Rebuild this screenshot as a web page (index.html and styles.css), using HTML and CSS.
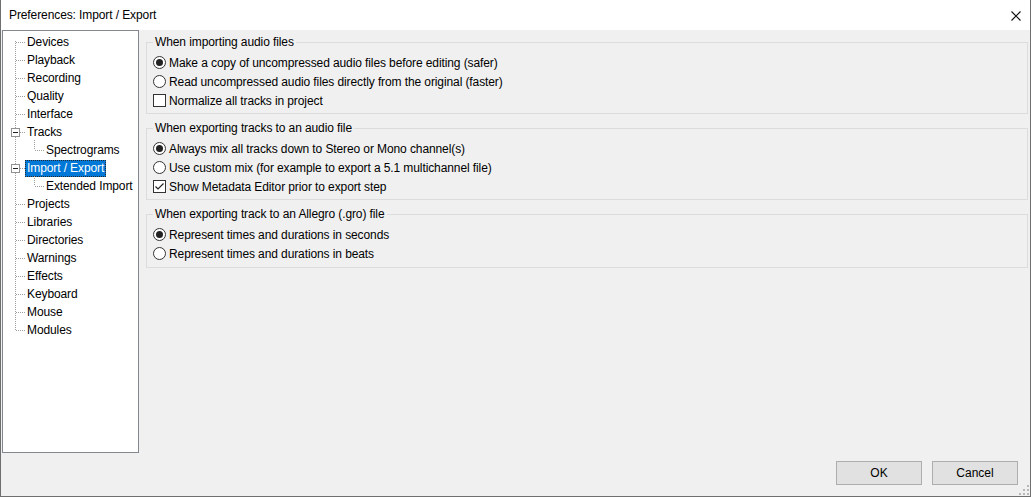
FILE: index.html
```html
<!DOCTYPE html>
<html>
<head>
<meta charset="utf-8">
<title>Preferences: Import / Export</title>
<link rel="stylesheet" href="styles.css">
</head>
<body>
<div class="window">
  <div class="titlebar">
    <span class="title">Preferences: Import / Export</span>
    <svg class="close" width="10" height="10" viewBox="0 0 10 10"><path d="M0.5 0.5 L9.5 9.5 M9.5 0.5 L0.5 9.5" stroke="#111" stroke-width="1.1" fill="none"/></svg>
  </div>
  <div class="main">
    <div class="tree-panel">
      <ul class="tree">
        <li><div class="row"><span class="label">Devices</span></div></li>
        <li><div class="row"><span class="label">Playback</span></div></li>
        <li><div class="row"><span class="label">Recording</span></div></li>
        <li><div class="row"><span class="label">Quality</span></div></li>
        <li><div class="row"><span class="label">Interface</span></div></li>
        <li><div class="row parent"><span class="exp"></span><span class="label">Tracks</span></div>
          <ul class="sub"><li><div class="row child"><span class="label">Spectrograms</span></div></li></ul>
        </li>
        <li><div class="row parent"><span class="exp"></span><span class="label selected">Import / Export</span></div>
          <ul class="sub"><li><div class="row child"><span class="label">Extended Import</span></div></li></ul>
        </li>
        <li><div class="row"><span class="label">Projects</span></div></li>
        <li><div class="row"><span class="label">Libraries</span></div></li>
        <li><div class="row"><span class="label">Directories</span></div></li>
        <li><div class="row"><span class="label">Warnings</span></div></li>
        <li><div class="row"><span class="label">Effects</span></div></li>
        <li><div class="row"><span class="label">Keyboard</span></div></li>
        <li><div class="row"><span class="label">Mouse</span></div></li>
        <li><div class="row"><span class="label">Modules</span></div></li>
      </ul>
    </div>
    <div class="content">
      <fieldset class="group">
        <legend>When importing audio files</legend>
        <div class="opt"><span class="radio on"></span><span>Make a copy of uncompressed audio files before editing (safer)</span></div>
        <div class="opt"><span class="radio"></span><span>Read uncompressed audio files directly from the original (faster)</span></div>
        <div class="opt"><span class="check"></span><span>Normalize all tracks in project</span></div>
      </fieldset>
      <fieldset class="group">
        <legend>When exporting tracks to an audio file</legend>
        <div class="opt"><span class="radio on"></span><span>Always mix all tracks down to Stereo or Mono channel(s)</span></div>
        <div class="opt"><span class="radio"></span><span>Use custom mix (for example to export a 5.1 multichannel file)</span></div>
        <div class="opt"><span class="check"><svg width="11" height="11" viewBox="0 0 11 11"><path d="M1.5 5.5 L4 8 L9.5 2.5" stroke="#222" stroke-width="1.2" fill="none"/></svg></span><span>Show Metadata Editor prior to export step</span></div>
      </fieldset>
      <fieldset class="group last">
        <legend>When exporting track to an Allegro (.gro) file</legend>
        <div class="opt"><span class="radio on"></span><span>Represent times and durations in seconds</span></div>
        <div class="opt"><span class="radio"></span><span>Represent times and durations in beats</span></div>
      </fieldset>
    </div>
  </div>
  <div class="footer">
    <button class="btn">OK</button>
    <button class="btn">Cancel</button>
  </div>
  <svg class="grip" width="10" height="10" viewBox="0 0 10 10">
    <rect x="8" y="0" width="2" height="2" fill="#b8b8b8"/>
    <rect x="4" y="4" width="2" height="2" fill="#b8b8b8"/>
    <rect x="8" y="4" width="2" height="2" fill="#b8b8b8"/>
    <rect x="0" y="8" width="2" height="2" fill="#b8b8b8"/>
    <rect x="4" y="8" width="2" height="2" fill="#b8b8b8"/>
    <rect x="8" y="8" width="2" height="2" fill="#b8b8b8"/>
  </svg>
</div>
</body>
</html>
```
FILE: styles.css
```css
* { box-sizing: border-box; }
html, body { margin: 0; padding: 0; }
body {
  font-family: "Liberation Sans", Arial, sans-serif;
  font-size: 12px;
  letter-spacing: -0.1px;
  color: #000;
  background: #f0f0f0;
}
.window {
  position: relative;
  width: 1031px;
  height: 497px;
  background: #f0f0f0;
  border: 1px solid #6f6f6f;
  border-top: none;
  display: flex;
  flex-direction: column;
}
.titlebar {
  height: 30px;
  flex: none;
  background: #fff;
  display: flex;
  align-items: center;
  justify-content: space-between;
  padding: 0 9px 0 8px;
}
.title { font-size: 12px; }
.close { display: block; margin-top: 1px; }

.main {
  height: 423px;
  flex: none;
  display: flex;
}
.tree-panel {
  width: 137px;
  height: 423px;
  margin-left: 1px;
  background: #fff;
  border: 1px solid #828790;
  padding-top: 2px;
  flex: none;
}
.tree, .sub {
  list-style: none;
  margin: 0;
  padding: 0;
}
.tree { position: relative; }
.tree::before {
  content: "";
  position: absolute;
  left: 12px;
  top: 8px;
  bottom: 9px;
  width: 1px;
  background: repeating-linear-gradient(to bottom, #a0a0a0 0 1px, transparent 1px 2px);
}
.sub { position: relative; }
.sub::before {
  content: "";
  position: absolute;
  left: 31px;
  top: -1px;
  height: 10px;
  width: 1px;
  background: repeating-linear-gradient(to bottom, #a0a0a0 0 1px, transparent 1px 2px);
}
.row {
  position: relative;
  height: 18px;
  display: flex;
  align-items: center;
  padding-left: 22px;
}
.row::before {
  content: "";
  position: absolute;
  left: 13px;
  top: 9px;
  width: 9px;
  height: 1px;
  background: repeating-linear-gradient(to right, #a0a0a0 0 1px, transparent 1px 2px);
}
.row.child { padding-left: 41px; }
.row.child::before { left: 32px; width: 9px; }
.row.parent::before { left: 17px; width: 5px; }
.exp {
  position: absolute;
  left: 8px;
  top: 5px;
  width: 9px;
  height: 9px;
  border: 1px solid #919191;
  background: #fff;
  z-index: 1;
}
.exp::after {
  content: "";
  position: absolute;
  left: 1px;
  top: 3px;
  width: 5px;
  height: 1px;
  background: #222;
}
.label {
  padding: 0 2px;
  line-height: 17px;
  height: 17px;
  white-space: nowrap;
}
.label.selected {
  background: #0078d7;
  color: #fff;
  outline: 1px dotted #2a2a2a;
  outline-offset: -1px;
}

.content {
  flex: 1;
  padding: 4px 2px 0 7px;
  display: flex;
  flex-direction: column;
  gap: 6px;
}
.group {
  margin: 0;
  border: 1px solid #dcdcdc;
  padding: 3px 0 3px 6px;
  min-width: 0;
}
.group.last { padding-bottom: 4px; }
.group legend {
  padding: 0 2px;
  line-height: 16px;
  font-size: 12px;
}
.opt {
  height: 19px;
  display: flex;
  align-items: center;
  gap: 3px;
  white-space: nowrap;
}
.radio {
  width: 13px;
  height: 13px;
  border: 1px solid #333;
  border-radius: 50%;
  background: #fff;
  display: flex;
  align-items: center;
  justify-content: center;
  flex: none;
}
.radio.on::after {
  content: "";
  width: 7px;
  height: 7px;
  border-radius: 50%;
  background: #222;
}
.check {
  width: 13px;
  height: 13px;
  border: 1px solid #333;
  background: #fff;
  flex: none;
  display: flex;
  align-items: center;
  justify-content: center;
}
.check svg { display: block; }

.footer {
  flex: none;
  display: flex;
  justify-content: flex-end;
  gap: 10px;
  padding: 8px 12px 11px 0;
}
.btn {
  width: 86px;
  height: 24px;
  background: #e1e1e1;
  border: 1px solid #adadad;
  font-family: "Liberation Sans", Arial, sans-serif;
  font-size: 12px;
  color: #000;
  padding: 0;
  margin: 0;
}
.grip {
  position: absolute;
  right: 1px;
  bottom: 1px;
}
```
